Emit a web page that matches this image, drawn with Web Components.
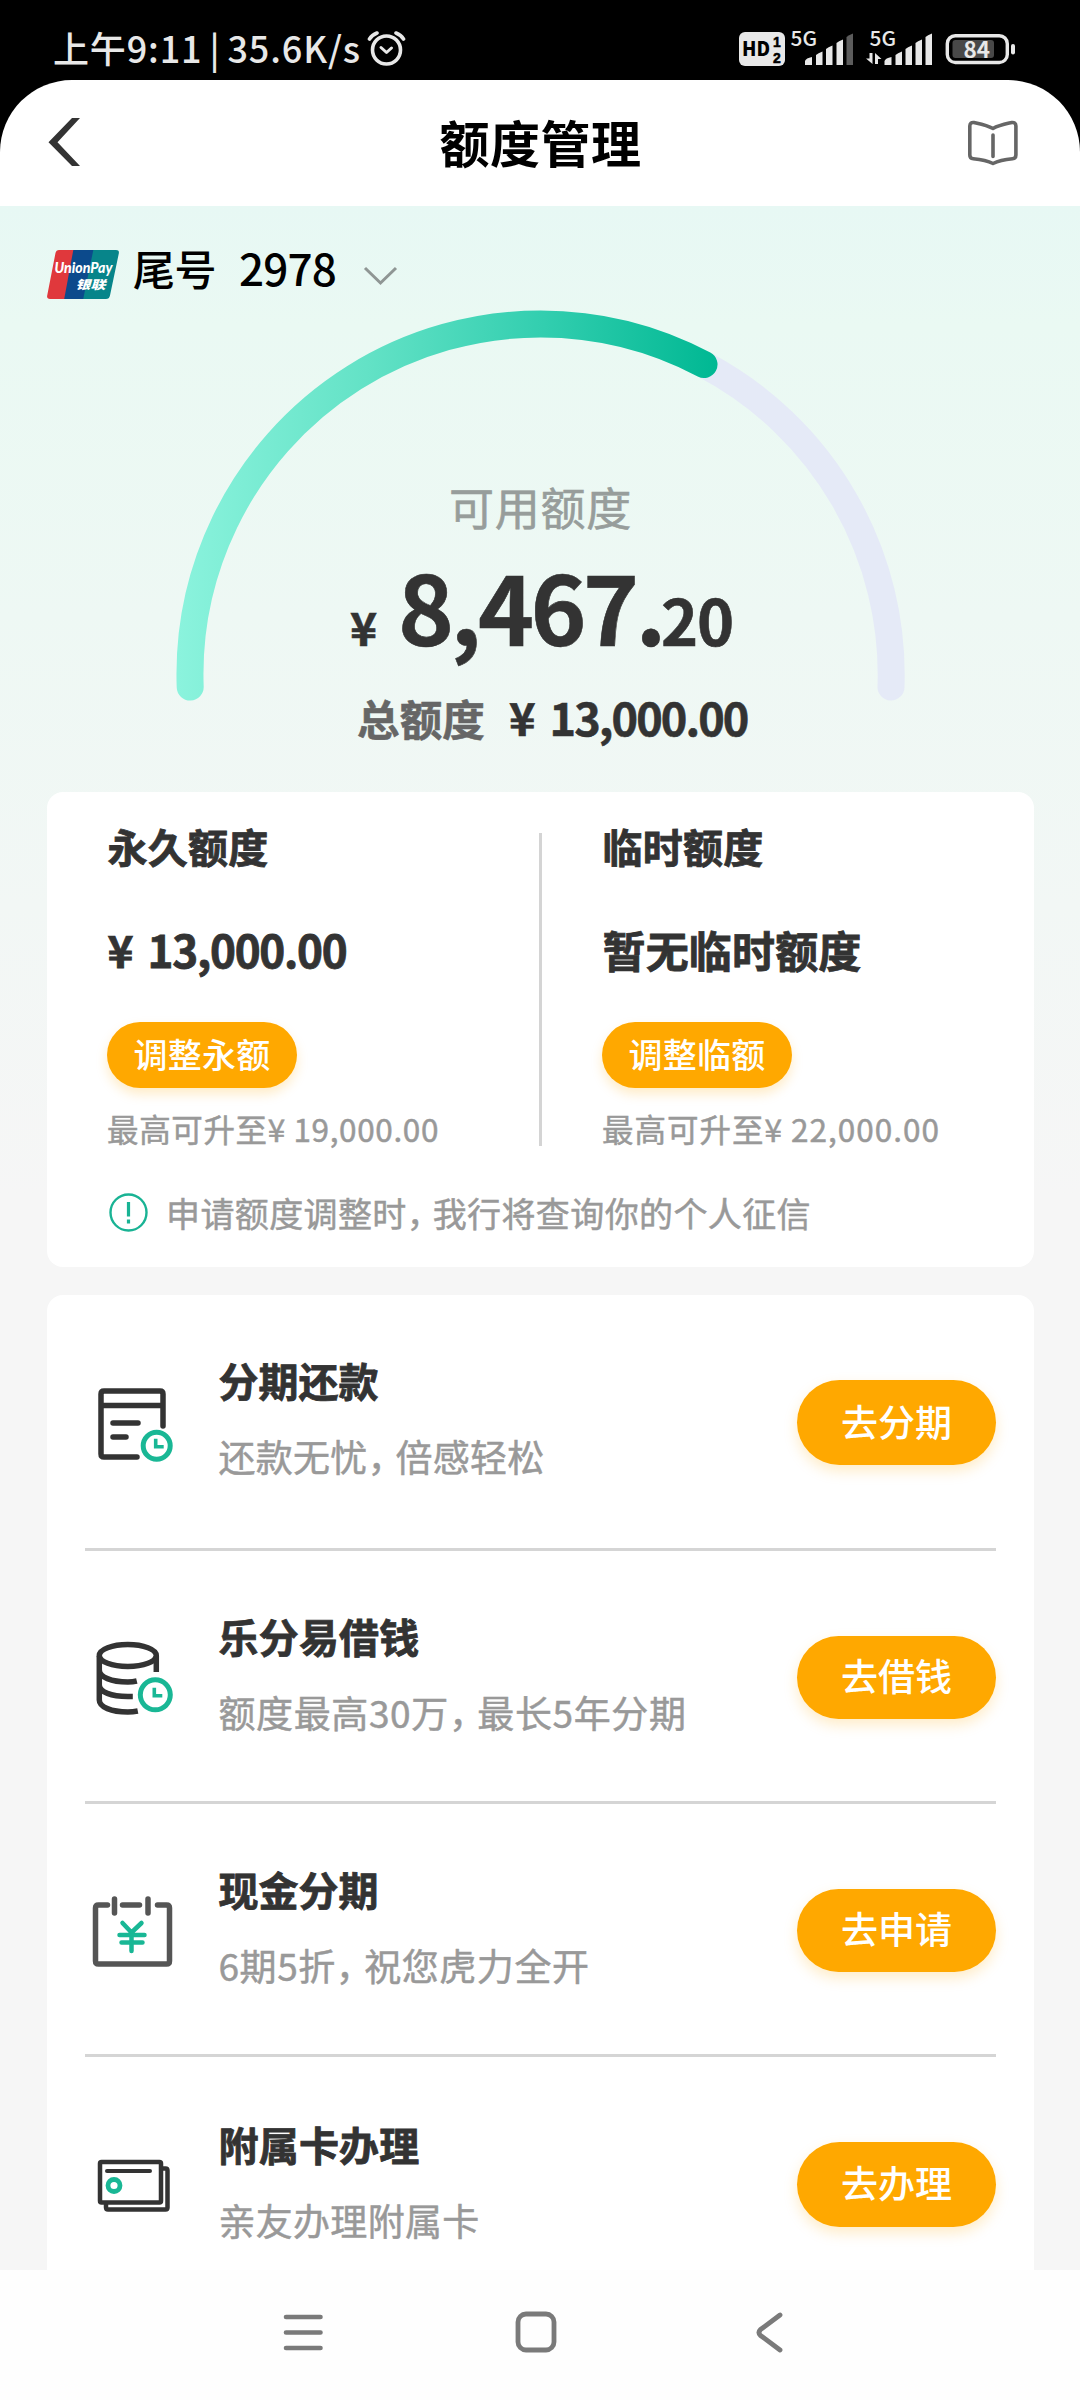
<!DOCTYPE html>
<html lang="zh-CN">
<head>
<meta charset="utf-8">
<title>额度管理</title>
<style>
html,body{margin:0;padding:0}
body{width:1080px;height:2400px;overflow:hidden;display:flex;flex-direction:column;background:#fefefe;
font-family:"Noto Sans CJK SC","Noto Sans",sans-serif;color:#333;line-height:1}
</style>
</head>
<body>
<status-bar></status-bar>
<app-header>额度管理</app-header>
<page-body>
  <card-picker>尾号|2978</card-picker>
  <limit-gauge></limit-gauge>
  <limit-card></limit-card>
  <service-list>
    <service-row icon="bill" head="分期还款" hw="160" sub="还款无忧，倍感轻松" sw="326" action="去分期" style="height:255.5px;--iy:1px"></service-row>
    <service-row icon="coins" head="乐分易借钱" hw="201" sub="额度最高30万，最长5年分期" sw="468" action="去借钱" style="height:253.5px;--bh:83px;--iy:-2px"></service-row>
    <service-row icon="calendar" head="现金分期" hw="160" sub="6期5折，祝您虎力全开" sw="371" action="去申请" style="height:252.5px;--bh:83px;--by:-.5px;--iy:1px"></service-row>
    <service-row icon="cards" head="附属卡办理" hw="201" sub="亲友办理附属卡" sw="261" action="去办理" last style="height:255px;--ty:2px;--iy:2px"></service-row>
  </service-list>
</page-body>
<nav-bar></nav-bar>

<script>
const shadow = (el, html) => { el.attachShadow({mode:'open'}).innerHTML = html; };

class StatusBar extends HTMLElement {
  constructor(){ super(); shadow(this, `
<style>
:host{display:flex;height:80px;background:#000;color:#e8e8e8;flex:none;box-sizing:border-box;padding:0 63px 0 53px;align-items:flex-start;justify-content:space-between}
.l{display:flex;padding-top:24px;font-size:36px;line-height:46px;font-weight:500;word-spacing:-2px}
.l svg{margin:7px 0 0 6px}
svg{display:block}
</style>
<div class="l"><t-fit w="308">上午9:11 | 35.6K/s</t-fit>
<svg width="40" height="36" viewBox="367 31 40 36" fill="none" stroke="#e8e8e8" stroke-linecap="round" stroke-linejoin="round"><circle cx="386.5" cy="50" r="14" stroke-width="3.6"/><path d="M381 47.5l5.5 5 5-4.5" stroke-width="3"/><path d="M369.5 39q2.500-4 7.500-6M403.500 39q-2.500-4-7.500-6" stroke-width="3.600"/></svg></div>
<svg width="280" height="80" viewBox="737 0 280 80" fill="#e8e8e8" font-family="'Noto Sans CJK SC',sans-serif">
<rect x="739" y="32" width="46" height="34" rx="6"/>
<text x="742" y="56" font-size="20" font-weight="900" fill="#000" textLength="28" lengthAdjust="spacingAndGlyphs">HD</text>
<g font-family="'Liberation Sans',sans-serif" font-size="14" font-weight="700" fill="#000" stroke="#000" stroke-width=".5"><text x="773" y="46.500">1</text><text x="773" y="63">2</text></g>
<text x="790.500" y="45.500" font-size="19.500" font-weight="500" textLength="26.500" lengthAdjust="spacingAndGlyphs">5G</text>
<path d="M805 65v-4q1-3 7-4v8zM816 65V55q2-2 6.500-3.500V65zM826 65V49q2-2 6.500-3.500V65zM836.500 65V43q2-2 6.500-3.500V65z"/>
<path d="M846.500 65V37q2-2 6.500-3.500V65z" fill="#5c5c5c"/>
<text x="869.500" y="45.500" font-size="19.500" font-weight="500" textLength="26.500" lengthAdjust="spacingAndGlyphs">5G</text>
<path d="M884.500 65v-4q1-3 7-4v8zM895.500 65V55q2-2 6.500-3.500V65zM905.500 65V49q2-2 6.500-3.500V65zM915.500 65V43q2-2 6.500-3.500V65zM925.500 65V37q2-2 6.500-3.500V65z"/>
<path d="M869.500 53h3v11L866 58.500h3.500zM875 64V53l6.500 6H878v5z"/>
<rect x="947.300" y="35.700" width="60" height="26.800" rx="8" fill="none" stroke="#e8e8e8" stroke-width="3.400"/>
<rect x="952.500" y="40" width="41.500" height="18" rx="3" fill="#484848"/>
<rect x="1011" y="44" width="4" height="10.500" rx="2"/>
<text x="963.500" y="58" font-size="22" font-weight="700" textLength="26.500" lengthAdjust="spacingAndGlyphs">84</text>
</svg>`); }
}

class AppHeader extends HTMLElement {
  constructor(){ super(); shadow(this, `
<style>
:host{display:block;background:#000;flex:none;height:126px}
.bar{height:126px;background:#fff;border-radius:72px 72px 0 0;display:flex;align-items:center;justify-content:space-between;box-sizing:border-box;padding:0 60px 0 48px;color:#000}
h1{margin:0 0 4px 13px;font-size:50px;font-weight:700;line-height:60px}
svg{display:block}
</style>
<div class="bar">
<svg width="54" height="50" viewBox="48 117 54 50" style="margin-bottom:2px"><path d="M72 118h8L57.500 142.300 80 166h-8L48.500 142.300z" fill="#333"/></svg>
<h1><t-fit w="202"><slot></slot></t-fit></h1>
<svg width="54" height="50" viewBox="966 118 54 50" fill="none" stroke="#666" stroke-width="3.600" stroke-linejoin="round" stroke-linecap="round" style="margin-bottom:1px"><path d="M993 128.500C987 125 981 124 974 122.500q-4-.5-4.200 3.500V155q0 3.500 3.500 3.800C981 159.500 987 160.500 993 163.500C999 160.500 1005 159.500 1012.500 158.800q3.400-.3 3.400-3.800V126q-.2-4-4.200-3.500C1005 124 999 125 993 128.500zM993 135v21.500"/></svg>
</div>`); }
}

class PageBody extends HTMLElement {
  constructor(){ super(); shadow(this, `
<style>:host{display:flex;flex-direction:column;flex:none;height:2063.500px;overflow:hidden;background:linear-gradient(#e7f8f4 0,#eaf9f3 120px,#f6f6f6 990px) #f6f6f6}</style><slot></slot>`); }
}

class CardPicker extends HTMLElement {
  constructor(){ super();
    const [label, tail] = this.textContent.split('|');
    shadow(this, `
<style>
:host{display:flex;height:100px;box-sizing:border-box;padding:29px 0 0 46px;align-items:flex-start;color:#000;font-size:42px;line-height:66px;font-weight:500;flex:none}
svg{display:block}
.logo{margin:14px 13px 0 0}
.num{font-size:44px;margin:-1px 0 0 23px}
.chev{margin:31px 0 0 27px}
</style>
<svg class="logo" width="74" height="51" viewBox="46 249 74 51"><defs><clipPath id="c"><path d="M59 250h57q3.500 0 2.800 3.500L110 295.500q-.8 3.500-4 3.500H50q-3.500 0-2.800-3.500L55.500 253q.7-3 3.500-3z"/></clipPath></defs><g clip-path="url(#c)"><path d="M44 249h40v51H44z" fill="#e0383c"/><path d="M73.500 249H100v51H64z" fill="#0c4a8c"/><path d="M93.500 249H122v51H83z" fill="#07858a"/></g>
<g fill="#fff" font-style="italic" font-weight="900"><text x="54.500" y="272.500" font-family="Lato,sans-serif" font-size="15" textLength="58" lengthAdjust="spacingAndGlyphs">UnionPay</text><text x="75.500" y="289" font-family="'Noto Sans CJK SC',sans-serif" font-size="12" textLength="30" lengthAdjust="spacingAndGlyphs">银联</text></g></svg>
<t-fit w="83">${label}</t-fit><t-fit class="num" w="97">${tail}</t-fit>
<svg class="chev" width="36" height="20" viewBox="363 266 36 20" fill="none" stroke="#8f9694" stroke-width="3"><path d="M365 268l15.500 15L396 268"/></svg>`); }
}

class LimitGauge extends HTMLElement {
  constructor(){ super(); shadow(this, `
<style>
:host{display:grid;height:486px;flex:none}
svg,.info{grid-area:1/1}
svg{display:block}
.info{display:flex;flex-direction:column;align-items:flex-start;padding-top:171px}
.cap{font-size:45px;line-height:60px;color:#979d9b;margin-left:449px;-webkit-text-stroke:.6px}
.amt{display:flex;align-items:baseline;margin:8px 0 0 350px;line-height:120px;height:120px;font-weight:700;-webkit-text-stroke:.6px}
.amt .y{font-size:46px;font-weight:700}
.amt .m{font-size:95px;margin-left:21px}
.amt .d{font-size:63px;margin-left:-2px}
.tot{display:flex;align-items:baseline;margin:22px 0 0 357px;line-height:60px;font-weight:700;-webkit-text-stroke:.6px}
.tot .a{font-size:42.500px;color:#666}
.tot .y{font-size:45px;font-weight:700;margin-left:24px}
.tot .b{font-size:45px;margin-left:13.500px}
</style>
<svg width="1080" height="486" viewBox="0 306 1080 486" fill="none" stroke-width="27" stroke-linecap="round"><defs><linearGradient id="g" gradientUnits="userSpaceOnUse" x1="178" y1="0" x2="717" y2="0"><stop offset="0" stop-color="#8bf3dd"/><stop offset=".35" stop-color="#63e2c6"/><stop offset=".68" stop-color="#32ceaf"/><stop offset="1" stop-color="#00b893"/></linearGradient></defs>
<path d="M706 365.700A350.500 350.500 0 0 1 891 687" stroke="#e5eaf7"/><path d="M190.200 687A350.500 350.500 0 0 1 704 364.500" stroke="url(#g)"/></svg>
<div class="info">
<t-fit class="cap" w="183">可用额度</t-fit>
<div class="amt"><t-fit class="y" w="27">¥</t-fit><t-fit class="m" w="265">8,467.</t-fit><t-fit class="d" w="72">20</t-fit></div>
<div class="tot"><t-fit class="a" w="128">总额度</t-fit><t-fit class="y" w="27">¥</t-fit><t-fit class="b" w="198">13,000.00</t-fit></div>
</div>`); }
}

class LimitCard extends HTMLElement {
  constructor(){ super(); shadow(this, `
<style>
:host{display:flex;flex-direction:column;width:987px;height:475px;margin-left:47px;background:#fff;border-radius:16px;flex:none}
.cols{display:flex;padding:41px 0 0 60px;height:313px}
.col{width:432px;display:flex;flex-direction:column;align-items:flex-start}
.rule{width:3px;background:#d4d4d4;height:313px;margin-right:60px}
.h{font-size:40px;font-weight:700;line-height:50px;margin:-12px 0 0 .5px;-webkit-text-stroke:.8px}
.v{display:flex;flex:none;font-size:44px;font-weight:700;line-height:60px;height:60px;margin:47.500px 0 0 .5px;align-items:baseline;-webkit-text-stroke:.8px}
.v .n{margin-left:12px}
.btn{display:flex;flex:none;justify-content:center;width:190px;height:66px;border-radius:33px;background:#ffa800;color:#fff;font-size:34px;font-weight:500;line-height:63px;margin-top:43.500px;box-shadow:0 6px 12px rgba(255,168,0,.22)}
.m{font-size:31.500px;line-height:40px;color:#999;margin:19.500px 0 0 0;-webkit-text-stroke:.5px}
.note{display:flex;align-items:center;padding:43px 0 0 61px;color:#999;font-size:34px;line-height:48px;-webkit-text-stroke:.5px}
.note svg{margin:-1px 18px 0 1px}
</style>
<div class="cols">
<div class="col"><t-fit class="h" w="161">永久额度</t-fit><div class="v"><t-fit w="28">¥</t-fit><t-fit class="n" w="199">13,000.00</t-fit></div><div class="btn"><t-fit w="137">调整永额</t-fit></div><t-fit class="m" w="332">最高可升至¥ 19,000.00</t-fit></div>
<div class="rule"></div>
<div class="col"><t-fit class="h" w="161">临时额度</t-fit><div class="v"><t-fit w="259" style="font-size:43px">暂无临时额度</t-fit></div><div class="btn"><t-fit w="137">调整临额</t-fit></div><t-fit class="m" w="338">最高可升至¥ 22,000.00</t-fit></div>
</div>
<div class="note"><svg width="39" height="39" viewBox="0 0 39 39" fill="none" stroke="#19b394" stroke-width="2.400"><circle cx="19.500" cy="19.500" r="18"/><path d="M19.500 9v14.500M19.500 26.500v4" stroke-width="3.200"/></svg><t-fit w="645">申请额度调整时，我行将查询你的个人征信</t-fit></div>`); }
}

class ServiceList extends HTMLElement {
  constructor(){ super(); shadow(this, `
<style>:host{display:flex;flex-direction:column;width:987px;margin:28px 0 0 47px;background:#fff;border-radius:16px 16px 0 0;flex:none}</style><slot></slot>`); }
}

const clock = (x,y,r) => `<circle cx="${x}" cy="${y}" r="${r}" stroke="#19b795" stroke-width="5"/><path d="M${x-1} ${y-7}v8h8" stroke="#19b795" stroke-width="3.600" stroke-linejoin="miter" stroke-linecap="butt"/>`;
const ICONS = {
  bill: `<path d="M163 1426V1394q0-3-3-3H104q-3 0-3 3v60q0 3 3 3h33M101 1405.500h62"/><path d="M113 1423h25M113 1437h13"/>${clock(156.700,1445.700,13.500)}`,
  coins: `<g transform="translate(-.7 -254)"><ellipse cx="128.500" cy="1909.500" rx="28.500" ry="11"/><path d="M100 1910v44c0 7 12 12 28.500 12q5 0 10-1M100 1924c0 7 12 12 28.500 12q5 0 9-1M100 1939c0 7 12 11.500 28.500 11.500h5M157 1910v16" stroke-linecap="butt"/></g>${clock(155.300,1694.800,15)}`,
  calendar: `<g stroke="#555"><path d="M109 1905h-9q-3 0-3 3v53q0 3 3 3h68q3 0 3-3v-53q0-3-3-3h-9M124 1905h17M116 1899v14M149.500 1899v14"/></g><path d="M124 1923l9 9.500 10-9.500M133 1932v19M121 1935h25M123 1942.500h21" stroke="#19b795" stroke-width="4.500"/>`,
  cards: `<g stroke-width="4.500"><path d="M162 2168.500h3.500q2 0 2 2v37q0 2-2 2H108q-2 0-2-2v-3"/><rect x="100" y="2162" width="61" height="40.500" rx="1.500"/><path d="M107 2171h43" stroke-width="4"/></g><circle cx="114" cy="2185.500" r="6" stroke="#19b795" stroke-width="4.800"/>`
};
const VIEW = {bill:'94 1384', coins:'94 1637', calendar:'95.5 1893', cards:'94 2147'};

class ServiceRow extends HTMLElement {
  constructor(){ super();
    const a = n => this.getAttribute(n);
    shadow(this, `
<style>
:host{display:flex;margin:0 38px;box-sizing:border-box;border-bottom:3px solid #d5d5d5;align-items:flex-start}
:host([last]){border-bottom:0}
.ic{display:block;flex:none;margin:calc(88px + var(--iy,0px)) 0 0 9px}
.tx{flex:1;display:flex;flex-direction:column;align-items:flex-start;margin:calc(60px + var(--ty,0px)) 0 0 44.500px}
.h{font-size:40px;font-weight:700;line-height:50px;-webkit-text-stroke:.8px}
.s{font-size:37px;line-height:50px;color:#999;margin-top:26px;-webkit-text-stroke:.5px}
.btn{display:flex;justify-content:center;align-items:center;width:199px;height:var(--bh,85px);margin-top:calc(85px + var(--by,0px));border-radius:43px;background:#ffa800;color:#fff;font-size:37px;font-weight:500;box-shadow:0 6px 14px rgba(255,168,0,.22)}
.btn t-fit{line-height:50px;margin-bottom:4px}
</style>
<svg class="ic" width="80" height="80" viewBox="${VIEW[a('icon')]} 80 80" fill="none" stroke="#333" stroke-width="5.500" stroke-linecap="round" stroke-linejoin="round" overflow="visible">${ICONS[a('icon')]}</svg>
<div class="tx"><t-fit class="h" w="${a('hw')}">${a('head')}</t-fit><t-fit class="s" w="${a('sw')}">${a('sub')}</t-fit></div>
<div class="btn"><t-fit w="111">${a('action')}</t-fit></div>`); }
}

class NavBar extends HTMLElement {
  constructor(){ super(); shadow(this, `
<style>:host{display:flex;flex:1;background:#fefefe;padding:41px 294px 0 281px;align-items:flex-start}svg{display:block}.b{margin-left:189px}.c{margin-left:auto}</style>
<svg width="44" height="44" fill="none" stroke="#7a7a7a" stroke-width="4.600" stroke-linecap="round"><path d="M5 6h34.500M5 21.500h34.500M5 37h34.500"/></svg>
<svg class="b" width="44" height="44" fill="none" stroke="#7a7a7a" stroke-width="4.800"><rect x="4" y="3" width="36" height="36" rx="8"/></svg>
<svg class="c" width="32" height="44" fill="none" stroke="#7a7a7a" stroke-width="4.800" stroke-linecap="round" stroke-linejoin="round"><path d="M26 4L6.500 18.500q-3 3 0 6L26 39"/></svg>`); }
}

/* Single line of text tracked out (or in) to the width given by "w". A full-width comma uses its half-width form plus a little space. */
class TFit extends HTMLElement {
  constructor(){ super(); shadow(this, `<style>:host{display:block;white-space:pre;flex:none}span{display:inline-block}</style><span><slot></slot></span>`); }
  connectedCallback(){
    const w = parseFloat(this.getAttribute('w'));
    if (!w) return;
    const s = this.querySelector('slot');
    const text = s ? s.assignedNodes().map(n => n.textContent).join('') : this.textContent;
    if (text.includes('，')) this.innerHTML = text.replace('，', `<span style="font-feature-settings:'halt';margin-right:.25em">，</span>`);
    const nat = this.shadowRoot.querySelector('span').getBoundingClientRect().width;
    this.style.letterSpacing = ((w - nat) / text.length).toFixed(3) + 'px';
  }
}
customElements.define('status-bar', StatusBar);
customElements.define('app-header', AppHeader);
customElements.define('page-body', PageBody);
customElements.define('card-picker', CardPicker);
customElements.define('limit-gauge', LimitGauge);
customElements.define('limit-card', LimitCard);
customElements.define('service-list', ServiceList);
customElements.define('service-row', ServiceRow);
customElements.define('nav-bar', NavBar);
customElements.define('t-fit', TFit);
</script>
</body>
</html>
